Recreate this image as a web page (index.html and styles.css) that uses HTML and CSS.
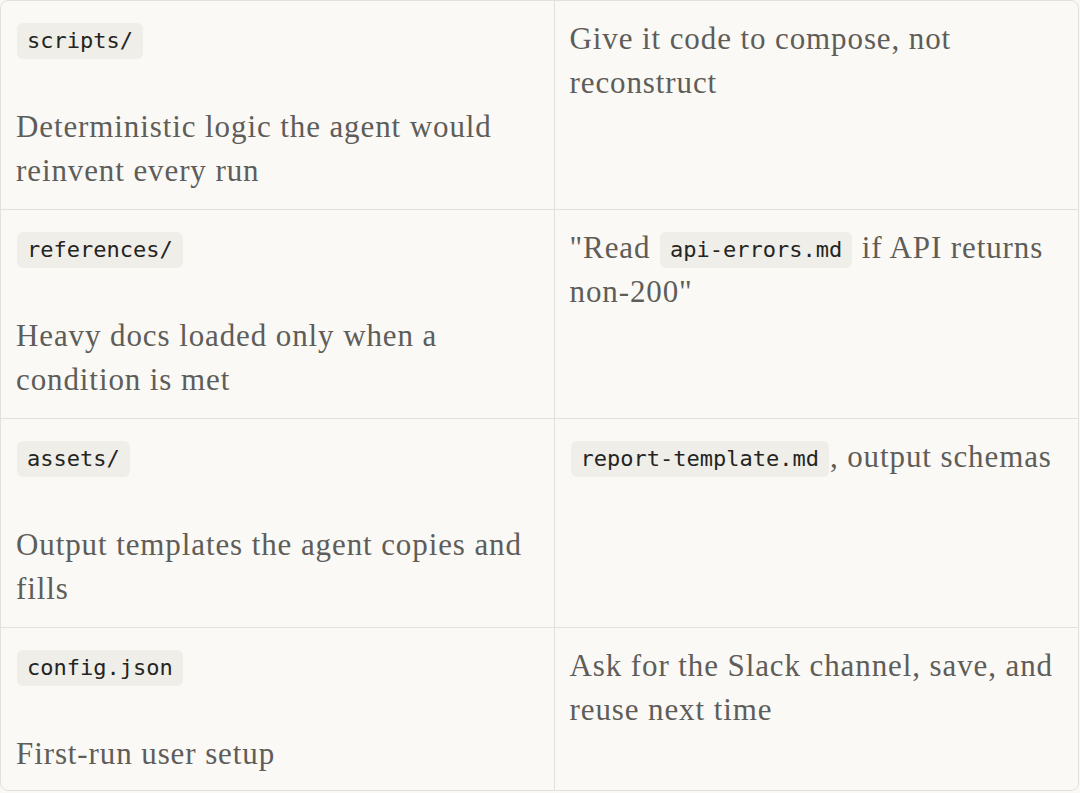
FILE: index.html
```html
<!DOCTYPE html>
<html lang="en">
  <head>
    <meta charset="UTF-8" />
    <title>Skill folder layout</title>
    <link rel="stylesheet" href="styles.css">
  </head>
  <body>
    <div class="table-wrap">
      <table class="folder-table">
        <tr>
          <td class="col-name"><code>scripts/</code><br /><br />Deterministic logic the agent would reinvent every run</td>
          <td class="col-use">Give it code to compose, not reconstruct</td>
        </tr>
        <tr>
          <td class="col-name"><code>references/</code><br /><br />Heavy docs loaded only when a condition is met</td>
          <td class="col-use">"Read <code>api-errors.md</code> if API returns non-200"</td>
        </tr>
        <tr>
          <td class="col-name"><code>assets/</code><br /><br />Output templates the agent copies and fills</td>
          <td class="col-use"><code>report-template.md</code>, output schemas</td>
        </tr>
        <tr class="last-row">
          <td class="col-name"><code>config.json</code><br /><br />First-run user setup</td>
          <td class="col-use">Ask for the Slack channel, save, and reuse next time</td>
        </tr>
      </table>
    </div>
  </body>
</html>
```

FILE: styles.css
```css
:root {
  --bg: #faf9f5;
  --border: #e3e1db;
  --text: #5e5d59;
  --code-bg: #efeee9;
  --code-text: #242422;
}
* {
  box-sizing: border-box;
}
html,
body {
  margin: 0;
  padding: 0;
  background-color: var(--bg);
}
.table-wrap {
  width: 1079px;
  height: 791px;
  border: 1px solid var(--border);
  border-radius: 8px;
  overflow: hidden;
}
.folder-table {
  width: 100%;
  height: 100%;
  border-collapse: collapse;
  table-layout: fixed;
  font-family: 'Liberation Serif', serif;
  font-size: 31px;
  letter-spacing: 0.9px;
  line-height: 44px;
  color: var(--text);
}
.folder-table td {
  vertical-align: top;
  height: 208px;
  padding: 16px 15px 16px 15px;
  border-top: 1px solid var(--border);
}
.folder-table tr:first-child td {
  border-top: none;
}
.folder-table .last-row td {
  height: auto;
}
.col-name {
  width: 553px;
  border-right: 1px solid var(--border);
}
code {
  display: inline-block;
  font-family: 'DejaVu Sans Mono', monospace;
  font-size: 22px;
  letter-spacing: 0;
  line-height: 22px;
  color: var(--code-text);
  background-color: var(--code-bg);
  border-radius: 6px;
  padding: 7px 10px;
  margin: 0 1px;
  vertical-align: 1px;
}
```
